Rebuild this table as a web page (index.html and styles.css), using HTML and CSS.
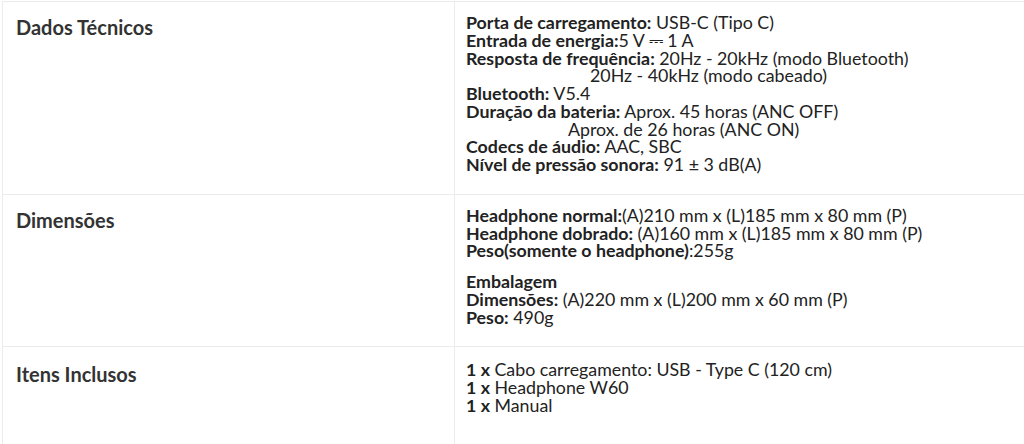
FILE: index.html
```html
<!DOCTYPE html>
<html lang="pt-BR">
<head>
<meta charset="utf-8">
<title>Especificações</title>
<link rel="stylesheet" href="styles.css">
</head>
<body>
<table class="specs">
  <tr>
    <th class="label">Dados Técnicos</th>
    <td class="value">
      <p>
        <b>Porta de carregamento:</b> USB-C (Tipo C)<br>
        <b>Entrada de energia:</b>5 V ⎓ 1 A<br>
        <b>Resposta de frequência:</b> 20Hz - 20kHz (modo Bluetooth)<br>
        <span class="indent1">20Hz - 40kHz (modo cabeado)</span><br>
        <b>Bluetooth:</b> V5.4<br>
        <b>Duração da bateria:</b> Aprox. 45 horas (ANC OFF)<br>
        <span class="indent2">Aprox. de 26 horas (ANC ON)</span><br>
        <b>Codecs de áudio:</b> AAC, SBC<br>
        <b>Nível de pressão sonora:</b> 91 ± 3 dB(A)
      </p>
    </td>
  </tr>
  <tr>
    <th class="label">Dimensões</th>
    <td class="value">
      <p>
        <b>Headphone normal:</b>(A)210 mm x (L)185 mm x 80 mm (P)<br>
        <b>Headphone dobrado:</b> (A)160 mm x (L)185 mm x 80 mm (P)<br>
        <b>Peso(somente o headphone)</b>:255g
      </p>
      <p>
        <b>Embalagem</b><br>
        <b>Dimensões:</b> (A)220 mm x (L)200 mm x 60 mm (P)<br>
        <b>Peso:</b> 490g
      </p>
    </td>
  </tr>
  <tr class="last">
    <th class="label">Itens Inclusos</th>
    <td class="value">
      <p>
        <b>1 x</b> Cabo carregamento: USB - Type C (120 cm)<br>
        <b>1 x</b> Headphone W60<br>
        <b>1 x</b> Manual
      </p>
    </td>
  </tr>
</table>
</body>
</html>
```

FILE: styles.css
```css
html, body {
  margin: 0;
  padding: 0;
  background: #ffffff;
}

body {
  font-family: Lato, "Open Sans", sans-serif;
  color: #222222;
  overflow: hidden;
}

.specs {
  margin: 1px 0 0 2px;
  width: 1040px;
  border-collapse: collapse;
}

.specs th,
.specs td {
  border: 1px solid #ececec;
  vertical-align: top;
  text-align: left;
}

.label {
  width: 425px;
  padding: 11px 13px 10px 13px;
  font-size: 20px;
  font-weight: 700;
  line-height: 28px;
  color: #333333;
}

.value {
  padding: 12px 11px 7px 11px;
  font-size: 17.8px;
  line-height: 17.75px;
}

.value p {
  margin: 0 0 13px 0;
}

.value b {
  font-weight: 700;
}

.last .label {
  padding-top: 13px;
}

.last .value {
  padding-top: 14px;
  padding-bottom: 60px;
}

.indent1 {
  padding-left: 124px;
}

.indent2 {
  padding-left: 102px;
}
```
